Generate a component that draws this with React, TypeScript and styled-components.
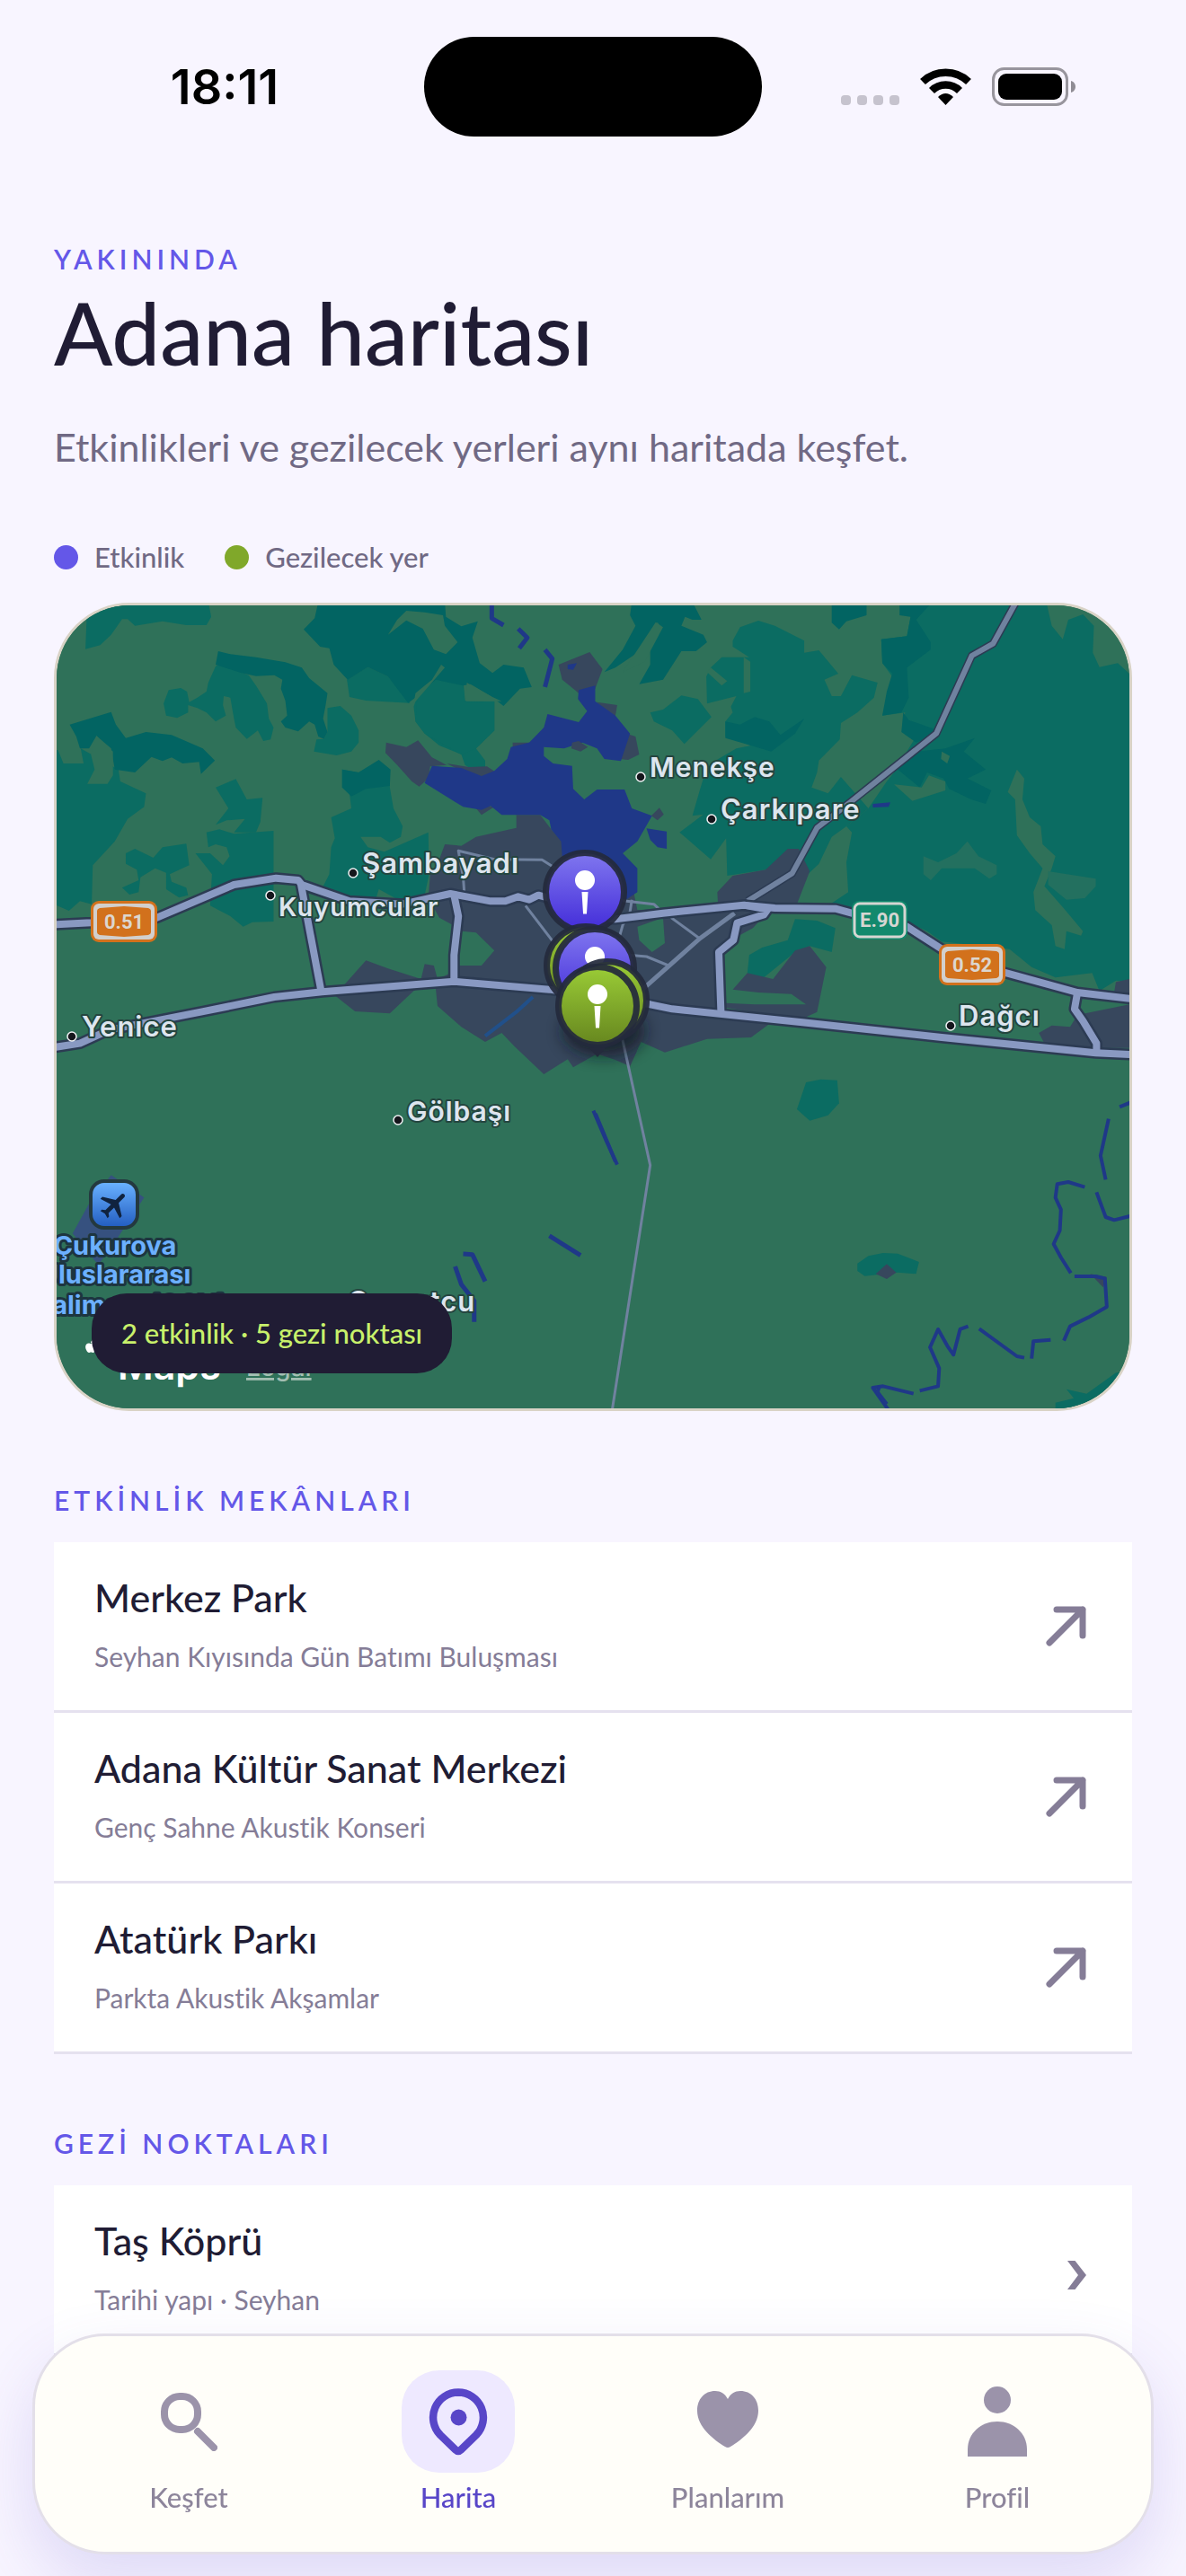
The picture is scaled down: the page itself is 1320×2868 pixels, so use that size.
import React from 'react';
import styled, { createGlobalStyle } from 'styled-components';
import { FaApple } from 'react-icons/fa';

const color = {
  page: '#f8f5ff',
  ink: '#201c34',
  violet: '#6457e8',
  violetDeep: '#5846c8',
  lime: '#c8f16b',
  olive: '#80a82a',
  muted: '#706984',
  faint: '#857d97',
  line: '#e5e1ef',
};

const land = {
  base: '#2f7159',
  hill: '#0b6c62',
  forest: '#026462',
  haze: '#23705f',
  water: '#1f3888',
  urban: '#37475d',
  road: '#8999c2',
  casing: '#2c3b53',
  minor: '#70829f',
};

const GlobalStyle = createGlobalStyle`
  *, *::before, *::after { box-sizing: border-box; }
  body {
    margin: 0;
    background: ${color.page};
    color: ${color.ink};
    font-family: Lato, "Open Sans", sans-serif;
    font-variant-ligatures: none;
  }
`;

const Page = styled.div`
  min-height: 100vh;
  background: ${color.page};
`;

/* ---------- status bar ---------- */

const StatusBar = styled.div`
  display: grid;
  grid-template-columns: 1fr 376px 1fr;
  align-items: center;
  height: 152px;
  padding-top: 41px;
`;

const Clock = styled.time`
  padding-left: 28px;
  text-align: center;
  font: 600 54px/60px Inter, sans-serif;
  color: #000;
`;

const Island = styled.div`
  height: 111px;
  border-radius: 56px;
  background: #000;
`;

const StatusIcons = styled.div`
  display: flex;
  justify-content: center;
  padding-right: 34px;
`;

/* ---------- content ---------- */

const Main = styled.main`
  display: flex;
  flex-direction: column;
  padding: 115px 60px 245px;
`;

const Eyebrow = styled.p`
  margin: 0;
  font-size: 30px;
  line-height: 42px;
  font-weight: 600;
  letter-spacing: 5px;
  color: ${color.violet};
`;

const Title = styled.h1`
  margin: 6px 0 43px;
  font-size: 96px;
  line-height: 110px;
  font-weight: 500;
`;

const Lead = styled.p`
  margin: 0;
  font-size: 43px;
  line-height: 60px;
  color: ${color.muted};
`;

const Legend = styled.ul`
  display: flex;
  gap: 45px;
  margin: 71px 0 30px;
  padding: 0;
  list-style: none;
`;

const LegendItem = styled.li<{ $dot: string }>`
  display: flex;
  align-items: center;
  gap: 18px;
  font-size: 31px;
  line-height: 42px;
  font-weight: 500;
  color: ${color.muted};

  &::before {
    content: "";
    width: 27px;
    height: 27px;
    border-radius: 50%;
    background: ${(p) => p.$dot};
  }
`;

const MapCard = styled.section`
  position: relative;
  height: 900px;
  overflow: hidden;
  border: 3px solid #d9d3c6;
  border-radius: 84px;
  background: ${land.base};
`;

const MapSvg = styled.svg`
  display: block;
  width: 100%;
  height: 100%;
`;

const CountBadge = styled.p`
  position: absolute;
  left: 39px;
  bottom: 39px;
  margin: 0;
  padding: 22px 33px;
  border-radius: 39px;
  background: ${color.ink};
  color: ${color.lime};
  font-size: 31px;
  line-height: 45px;
  font-weight: 500;
`;

const Section = styled.section`
  margin-top: 78px;
`;

const SectionTitle = styled.h2`
  margin: 0 0 26px;
  font-size: 30px;
  line-height: 42px;
  font-weight: 600;
  letter-spacing: 5px;
  color: ${color.violet};
`;

const List = styled.ul`
  margin: 0;
  padding: 0;
  list-style: none;
  background: #fff;
`;

const RowLink = styled.a`
  display: flex;
  align-items: center;
  justify-content: space-between;
  height: 190px;
  padding: 0 51px 0 45px;
  border-bottom: 3px solid ${color.line};
  color: inherit;
  text-decoration: none;
`;

const RowText = styled.span`
  display: flex;
  flex-direction: column;
  gap: 15px;
  padding-bottom: 6px;
`;

const RowTitle = styled.span`
  font-size: 43px;
  line-height: 58px;
  font-weight: 500;
`;

const RowNote = styled.span`
  font-size: 30px;
  line-height: 42px;
  color: ${color.faint};
`;

/* ---------- tab bar ---------- */

const TabBar = styled.nav`
  position: fixed;
  left: 36px;
  right: 36px;
  bottom: 24px;
  display: grid;
  grid-template-columns: repeat(4, 1fr);
  height: 246px;
  padding: 38px 21px 0;
  border: 3px solid #e3dfe9;
  border-radius: 81px;
  background: #fffef9;
  box-shadow: 0 30px 72px rgba(88, 70, 200, 0.16);
`;

const Tab = styled.button<{ $active?: boolean }>`
  display: flex;
  flex-direction: column;
  align-items: center;
  gap: 6px;
  padding: 0;
  border: 0;
  background: none;
  font: 500 31px/42px Lato, "Open Sans", sans-serif;
  font-variant-ligatures: none;
  color: ${(p) => (p.$active ? color.violetDeep : '#8d859b')};
  cursor: pointer;
`;

const TabIcon = styled.span<{ $active?: boolean }>`
  display: grid;
  place-items: center;
  width: 126px;
  height: 114px;
  border-radius: 42px;
  background: ${(p) => (p.$active ? '#eee9ff' : 'transparent')};
`;

/* ---------- map drawing ---------- */

const Shape = ({ fill, p }: { fill: string; p: string[] }) => (
  <g fill={fill}>
    {p.map((points) => (
      <polygon key={points} points={points} />
    ))}
  </g>
);

const Lines = ({ stroke, w, p }: { stroke: string; w: number; p: string[] }) => (
  <g fill="none" stroke={stroke} strokeWidth={w} strokeLinejoin="round">
    {p.map((points) => (
      <polyline key={points} points={points} vectorEffect="non-scaling-stroke" />
    ))}
  </g>
);

const highways = [
  '40,1109 150,1102 330,1085 540,975 655,953 715,960 725,975 855,1030 1000,1040 1130,1005 1240,1030 1280,1030 1315,1015 1345,1025 1370,1010 1400,1020 1480,1080 1580,1090 1710,1070 1930,1043 2015,1053 2180,1055 2240,1075 2375,1115 2470,1190 2640,1268 2840,1335 3000,1358',
  '40,1520 120,1505 200,1460 450,1400 650,1350 780,1333 1140,1298 1400,1325 1675,1375 1735,1390 2090,1435 2470,1485 2890,1537 3000,1543',
  '722,970 778,1333',
  '1140,1010 1152,1080 1140,1210 1140,1298',
  '1930,1043 1995,1058 1985,1075 1912,1103 1902,1160 1862,1200 1868,1403',
  '2840,1335 2832,1390 2855,1430 2892,1505 2892,1535',
];

const places = [
  { name: 'Menekşe', x: 723, y: 865, dx: 713, dy: 865, size: 30 },
  { name: 'Çarkıpare', x: 802, y: 912, dx: 792, dy: 912 },
  { name: 'Şambayadı', x: 403, y: 972, dx: 393, dy: 972 },
  { name: 'Kuyumcular', x: 310, y: 1020, dx: 301, dy: 997, size: 29 },
  { name: 'Yenice', x: 91, y: 1154, dx: 80, dy: 1154 },
  { name: 'Dağcı', x: 1067, y: 1142, dx: 1058, dy: 1142 },
  { name: 'Gölbaşı', x: 453, y: 1248, dx: 443, dy: 1247, size: 30 },
];

const airportLines = [
  { text: 'Çukurova', y: 1397 },
  { text: 'Uluslararası', y: 1429 },
  { text: 'Havalimanı (COV)', y: 1463 },
];

const Pin = ({ x, y, kind, plain }: { x: number; y: number; kind: string; plain?: boolean }) => (
  <g transform={`translate(${x} ${y})`}>
    <circle r="43" fill={`url(#${kind})`} />
    <circle r="43.5" fill="none" stroke="#242a3c" strokeWidth="7" strokeOpacity="0.93" />
    {!plain && (
      <g fill="#fff">
        <circle cy="-13" r="11" />
        <path d="M-3.500 0H3.500L2 24.500H-2Z" />
      </g>
    )}
  </g>
);

const Shield = ({ x, y, text }: { x: number; y: number; text: string }) => (
  <g transform={`translate(${x} ${y})`}>
    <rect width="74" height="46" rx="9" fill="#d2711c" />
    <rect x="3" y="3" width="68" height="40" rx="6" fill="#d2cfcc" />
    <path d="M7 11Q7 9 10 8L37 6L64 8Q67 9 67 11V35Q67 37 64 38L37 40L10 38Q7 37 7 35Z" fill="#d2711c" />
    <text x="37" y="31" textAnchor="middle" fill="#dcd6cf" fontFamily="Roboto, sans-serif" fontWeight="700" fontSize="22">
      {text}
    </text>
  </g>
);

const CityMap = () => (
  <MapSvg viewBox="63 674 1194 894" preserveAspectRatio="xMidYMid slice" role="img" aria-label="Adana haritası">
    <defs>
      <linearGradient id="event" x1="0" y1="0" x2="0" y2="1">
        <stop offset="0.050" stopColor="#7d73ee" />
        <stop offset="0.950" stopColor="#4630da" />
      </linearGradient>
      <linearGradient id="place" x1="0" y1="0" x2="0" y2="1">
        <stop offset="0.050" stopColor="#97c835" />
        <stop offset="0.950" stopColor="#698a20" />
      </linearGradient>
      <linearGradient id="airport" x1="0" y1="0" x2="0" y2="1">
        <stop offset="0" stopColor="#69b1ff" />
        <stop offset="1" stopColor="#245fc2" />
      </linearGradient>
      <filter id="soft" x="-50%" y="-50%" width="200%" height="200%">
        <feGaussianBlur stdDeviation="9" />
      </filter>
    </defs>
    <rect x="63" y="674" width="1194" height="894" fill={land.base} />

    <g transform="translate(40 660) scale(0.40816 0.33333)">
      <Shape
        fill={land.hill}
        p={[
          '140,30 470,30 478,80 465,108 410,108 345,95 270,110 250,88 235,88 205,140 175,175 135,188',
          '490,245 500,240 580,275 600,310 630,370 635,420 648,450 640,490 620,495 605,460 575,488 545,450 540,420 530,350 512,345 510,375 518,410 490,430 465,400 440,385 415,375 415,400 385,418 355,410 348,370 362,325 395,318 412,330 418,365 440,350 465,330 470,300',
          '795,385 830,378 860,410 880,460 880,500 860,530 820,543 758,530 765,490 785,488 795,465',
          '905,248 960,280 1020,368 900,360 855,348 848,290',
          '1040,345 1100,280 1165,290 1170,360 1250,362 1250,460 1200,520 1225,560 1225,595 1210,605 1170,575 1160,540 1100,510 1060,470 1035,430 1030,380',
          '40,525 60,525 75,570 130,570 122,520 225,590 230,630 300,670 295,715 250,755 215,830 155,910 152,1040 120,1030 90,1062 40,1035',
          '490,650 545,622 575,690 618,685 612,765 600,800 540,800 570,755 520,760 490,775 525,720',
          '465,800 500,790 540,805 648,795 648,1098 590,1100 565,1115 530,1080 475,1045 480,940 435,870 475,870 510,910 528,880 520,850 490,840 470,850',
          '245,870 270,855 320,885 345,850 410,838 418,910 365,940 370,965 410,985 415,1010 390,1018 355,990 355,935 325,920 285,950 280,1000 255,1008 235,985 280,960 275,925 245,905',
          '835,590 880,600 935,560 965,590 965,650 975,720 1000,780 995,815 965,835 940,815 885,815 905,850 950,865 1070,800 1072,940 1060,1010 1030,1030 980,1020 935,990 925,1030 860,1035 775,1000 800,940 805,850 815,820 805,750 860,720 855,670 835,650',
        ]}
      />
      <Shape
        fill={land.forest}
        p={[
          '497,195 530,205 600,215 680,232 725,250 745,285 795,335 790,375 783,420 795,465 785,488 770,480 760,440 745,430 715,463 680,450 668,430 685,410 680,360 668,320 672,290 650,275 600,278 560,268 490,240',
          '770,30 1115,30 1118,80 1160,112 1205,95 1190,150 1210,235 1245,268 1275,240 1330,250 1352,315 1320,320 1275,378 1240,345 1185,305 1165,310 1165,340 1100,350 1040,345 1015,368 960,280 905,248 850,290 812,240 800,185 775,180 730,122 760,85',
          '92,440 205,398 218,440 245,485 300,465 370,475 455,520 488,560 450,605 445,565 400,570 370,550 345,562 315,548 270,600 215,590 205,520 165,478 145,520 120,520 110,480',
          '835,590 880,600 935,558 967,590 965,645 900,655 860,680 835,650',
        ]}
      />
      <Shape
        fill={land.hill}
        p={['1040,345 1090,290 1165,310 1170,365 1250,362 1250,460 1200,520 1160,540 1060,470 1035,430']}
      />
      <Shape
        fill={land.base}
        p={[
          '960,140 985,90 1010,60 1060,65 1110,75 1115,110 1150,165 1118,205 1085,190 1055,120 1010,92',
          '1105,240 1115,250 1030,370 1035,335 1080,290',
          '1175,300 1240,345 1270,362 1172,362',
          '165,478 210,530 210,610 195,638 140,638 160,590 150,540',
        ]}
      />
      <g transform="translate(1470 0)">
        <Shape
          fill={land.hill}
          p={[
            '430,160 450,115 500,93 545,110 625,160 625,200 665,192 718,270 680,290 700,345 725,345 755,275 825,300 815,350 770,400 725,435 722,490 665,560 660,600 645,650 690,670 725,615 800,720 740,780 700,815 665,905 635,940 610,855 520,925 415,945 412,820 370,890 285,800 350,740 320,745 340,660 355,600 370,570 440,520 480,510 410,480 410,430 430,400 425,380 440,345 360,370 358,280 370,250 400,215 475,215 430,180',
            '900,30 1285,30 1300,110 1330,155 1345,90 1385,72 1415,110 1412,200 1430,248 1480,235 1530,290 1530,1300 1475,1295 1430,1330 1410,1270 1310,1285 1245,1250 1185,1190 1000,1165 960,1130 905,1100 755,1065 690,1045 745,1000 740,900 755,800 740,780 800,720 850,630 870,600 930,480 895,465 900,400 838,410 865,280 838,235 835,155 905,145 915,80',
            '205,400 240,390 290,343 335,355 372,415 298,505 265,460 215,430',
            '600,1090 660,1095 710,1120 700,1200 640,1180 600,1200 500,1300 470,1270 475,1210 510,1185 580,1160',
          ]}
        />
        <Shape
          fill={land.forest}
          p={[
            '155,30 320,30 345,90 320,90 300,80 290,110 350,140 360,165 330,195 290,195 240,290 175,305 205,240 205,170 235,120 225,98 200,140 170,200 110,250 80,265 130,190 165,110 150,75',
            '700,30 795,30 795,75 740,95 720,122 700,100',
            '885,30 975,30 930,90 970,165 970,190 905,250 910,350 890,400 838,410 850,330 865,270 838,235 835,155 905,145 915,80 885,75',
            '410,430 450,440 490,415 530,430 560,475 625,420 600,470 535,530 480,510 410,485',
            '895,400 910,425 980,455 985,470 930,500 890,465',
            '1010,520 1090,485 1060,530 1120,590 1070,620 1135,660 1120,705 1080,690 1020,655 1005,620 960,600 940,650 880,590 930,530',
          ]}
        />
        <Shape
          fill={land.base}
          p={[
            '220,98 240,115 190,230 130,265 165,200',
            '460,215 478,230 478,330 460,335',
            '370,250 415,295 400,310 360,265',
            '1205,590 1225,620 1220,690 1240,750 1270,780 1275,840 1310,880 1300,920 1280,980 1330,1050 1385,1130 1380,1145 1340,1130 1335,1190 1310,1180 1300,1110 1255,1060 1250,1000 1275,920 1240,870 1205,810 1200,690 1180,665',
            '870,640 945,650 965,610 1010,630 1010,660 920,695',
            '1000,530 1022,545 1015,570 998,555',
          ]}
        />
        <Shape
          fill={land.haze}
          p={[
            '950,880 990,900 1040,870 1070,830 1100,880 1150,910 1150,940 1130,955 1090,920 1000,920 970,960 950,940',
            '1290,930 1420,955 1420,980 1390,1020 1340,1025 1290,975',
          ]}
        />
      </g>

      <Shape
        fill={land.urban}
        p={[
          '955,500 1010,515 1042,493 1080,550 1120,575 1075,580 1070,620 1045,647 1025,630 985,575 953,535',
          '1120,570 1180,582 1230,580 1255,600 1215,620 1160,595',
          '1300,500 1350,500 1345,515 1300,520',
          '1425,240 1510,198 1545,255 1525,320 1480,335 1435,290',
          '1190,705 1250,715 1215,742',
          '1310,742 1375,742 1405,790 1435,830 1480,900 1600,960 1630,1000 1640,1060 1860,1045 1858,1000 1900,945 1990,925 2050,855 2080,855 2110,930 2075,1040 2000,1060 1955,1120 1910,1150 1865,1200 1875,1390 2000,1440 1950,1485 1830,1490 1715,1535 1650,1500 1620,1582 1580,1560 1530,1540 1465,1585 1450,1558 1385,1608 1305,1515 1270,1470 1225,1500 1160,1450 1095,1380 1090,1320 1060,1310 1030,1330 965,1405 870,1398 815,1345 900,1228 960,1255 1050,1290 1060,1240 1085,1245 1095,1290 1140,1265 1145,1115 1100,1085 1070,1020 1075,940 1100,890 1115,840 1160,845 1200,815 1310,785',
          '2110,1180 2155,1250 2130,1400 2095,1420 2000,1410 1880,1385 1880,1370 1960,1375 2100,1375 2060,1340 1970,1335 1900,1325 1940,1270 2010,1290 2070,1195',
          '1530,365 1585,375 1580,412 1555,395',
          '1610,470 1635,480 1645,540 1615,558 1588,555 1595,500',
          '1700,718 1712,740 1695,760 1678,745',
          '2945,1300 3000,1285 3000,1370 2840,1345 2740,1322 2850,1330 2940,1335',
          '2840,1410 3000,1370 3000,1520 2910,1520 2750,1505 2735,1470 2770,1445 2820,1450',
        ]}
      />
      <Shape
        fill={land.base}
        p={['1160,1130 1200,1135 1250,1195 1215,1245 1145,1245', '1640,1115 1710,1085 1715,1170 1680,1200 1645,1160']}
      />
      <Shape
        fill={land.water}
        p={[
          '1395,405 1480,432 1503,395 1478,355 1480,325 1525,310 1525,362 1580,410 1620,470 1595,562 1550,555 1530,520 1490,500 1440,520 1385,515 1385,545 1410,570 1462,578 1465,655 1495,690 1530,657 1605,657 1625,720 1680,745 1640,830 1600,870 1640,920 1640,1000 1590,1040 1500,900 1435,880 1432,830 1405,790 1400,760 1375,742 1270,742 1240,712 1215,725 1165,715 1060,635 1080,578 1160,585 1215,612 1250,595 1285,555 1295,515 1345,500 1385,450',
          '1665,787 1720,797 1720,855 1695,850 1675,825',
          '2282,705 2330,700 2325,715 2282,717',
          '1450,240 1475,235 1465,257 1450,255',
        ]}
      />
      <Shape fill={land.urban} p={['1462,500 1480,495 1505,515 1485,530 1460,520']} />
      <Lines
        stroke={land.water}
        w={5}
        p={[
          '1243,30 1243,85 1275,108',
          '1315,120 1340,150 1318,185',
          '1388,190 1408,220 1388,315',
          '1400,2148 1485,2213',
          '1165,2208 1190,2210 1225,2300',
          '1143,2250 1160,2310 1195,2365 1195,2435',
        ]}
      />
      <Lines stroke="#21508a" w={4} p={['1355,1350 1310,1400 1225,1480']} />

      <g transform="translate(1470 1320)">
        <Shape
          fill={land.hill}
          p={[
            '630,315 670,305 715,308 720,385 690,425 640,443 605,405',
            '770,920 800,895 840,885 880,887 938,915 930,955 880,950 790,962 770,945',
            '1310,1385 1360,1370 1340,1340 1395,1355 1475,1285 1530,1280 1530,1420 1310,1420',
          ]}
        />
        <Shape fill={land.urban} p={['850,922 876,950 850,972 820,955', '1405,955 1450,965 1440,1000']} />
        <Lines
          stroke={land.water}
          w={4}
          p={[
            '50,410 85,510 115,590',
            '56,420 90,520 110,580',
            '1485,397 1530,375',
            '1455,437 1433,560 1447,640',
            '1390,665 1345,648 1315,655 1310,700 1325,740 1322,810 1305,855 1325,900 1352,952',
            '1362,963 1420,963 1445,970 1450,1065 1400,1100 1350,1130 1333,1178',
            '1422,682 1447,765 1470,775 1530,757',
            '1297,1175 1250,1180 1245,1238',
            '1225,1235 1205,1230 1102,1138',
            '1072,1130 1050,1140 1032,1225 1015,1195 990,1140 968,1200 993,1270 990,1330 940,1345',
            '923,1355 840,1330 812,1335 855,1410',
            '830,1330 825,1350 850,1390',
          ]}
        />
      </g>
      <Shape fill="#36517f" p={['205,1945 295,2020 225,2150 170,2245 100,2140 145,2040']} />

      <Lines stroke={land.casing} w={9} p={['2673,30 2610,170 2552,210 2455,470 2220,700 2130,785 2062,937 1940,1030']} />
      <Lines stroke={land.minor} w={6} p={['2673,30 2610,170 2552,210 2455,470 2220,700 2130,785 2062,937 1940,1030']} />
      <Lines stroke={land.minor} w={5} p={['1905,1070 1810,1155 1640,1340']} />
      <Lines
        stroke={land.minor}
        w={3}
        p={[
          '1732,1085 1810,1155',
          '1600,1028 1685,1040 1698,1055',
          '1600,1208 1665,1215 1725,1245',
          '1625,1025 1620,1065 1600,1110 1592,1145',
          '1168,1000 1165,950 1152,862 1250,890 1380,892 1410,915 1480,950',
          '1335,1045 1410,1165',
          '1590,1440 1675,1912 1570,2740',
        ]}
      />
      <Lines stroke={land.casing} w={13} p={highways} />
      <Lines stroke={land.road} w={8} p={highways} />
    </g>

    <Shield x={101} y={1003} text="0.51" />
    <Shield x={1045} y={1051} text="0.52" />
    <g transform="translate(948 1003)">
      <rect width="62" height="43" rx="8" fill="#12896d" />
      <rect x="3" y="3" width="56" height="37" rx="6" fill="none" stroke="#d6d6d2" strokeWidth="3" />
      <text x="31" y="29" textAnchor="middle" fill="#d6d6d2" fontFamily="Roboto, sans-serif" fontWeight="700" fontSize="22">
        E.90
      </text>
    </g>

    <g fontFamily="Inter, Roboto, sans-serif" fontWeight="600" fill="#dde5ee" stroke="#24453f" strokeWidth="4" strokeLinejoin="round" paintOrder="stroke" letterSpacing="1">
      {places.map((p) => (
        <text key={p.name} x={p.x} y={p.y} fontSize={p.size ?? 31}>
          {p.name}
        </text>
      ))}
      <text x="387" y="1460" fontSize="31">
        Camutcu
      </text>
    </g>
    {places.map((p) => (
      <circle key={p.name} cx={p.dx} cy={p.dy} r="5" fill="#15161c" stroke="#f0f2f4" strokeWidth="1.500" />
    ))}

    <rect x="99" y="1313" width="56" height="56" rx="17" fill="#24393f" />
    <rect x="103" y="1317" width="48" height="48" rx="13" fill="url(#airport)" />
    <path
      transform="translate(127 1341) rotate(45) scale(1.600) translate(-11.500 -12)"
      d="M21 16v-2l-8-5V3.500c0-.83-.67-1.500-1.500-1.500S10 2.670 10 3.500V9l-8 5v2l8-2.500V19l-2 1.500V22l3.500-1 3.500 1v-1.500L13 19v-5.500z"
      fill="#10233f"
    />
    <g fontFamily="Inter, Roboto, sans-serif" fontWeight="700" fontSize="29" fill="#6cb0ff" stroke="#1d3540" strokeWidth="6" strokeLinejoin="round" paintOrder="stroke" textAnchor="middle">
      {airportLines.map((l) => (
        <text key={l.text} x="128" y={l.y}>
          {l.text}
        </text>
      ))}
    </g>

    <FaApple x={93} y={1491} width={40} height={48} color="#fff" />
    <text x="131" y="1536" fontFamily="Inter, Roboto, sans-serif" fontWeight="600" fontSize="43" fill="#fff">
      Maps
    </text>
    <a href="#legal">
      <text x="274" y="1532" fontFamily="Inter, Roboto, sans-serif" fontWeight="500" fontSize="28" fill="#a3bfb3" textDecoration="underline">
        Legal
      </text>
    </a>

    <ellipse cx="672" cy="1148" rx="46" ry="28" fill="#10151f" opacity="0.700" filter="url(#soft)" />
    <path d="M650 1160H680L665 1177Z" fill="#242a3c" />
    <Pin x={651} y={993} kind="event" />
    <Pin x={652} y={1075} kind="place" plain />
    <Pin x={662} y={1078} kind="event" />
    <Pin x={676} y={1114} kind="place" plain />
    <Pin x={665} y={1120} kind="place" />
  </MapSvg>
);

/* ---------- icons ---------- */

const OpenArrow = () => (
  <svg width="45" height="45" viewBox="0 0 45 45" fill="none" stroke={color.faint} strokeWidth="7" strokeLinecap="round" strokeLinejoin="round" aria-hidden="true">
    <path d="M4 41L41 4M12 4H41V33" />
  </svg>
);

const Chevron = () => (
  <svg width="21" height="44" viewBox="0 0 21 44" fill={color.faint} aria-hidden="true">
    <path d="M0 12H8.500L21 28L8.500 44H0L12 28Z" />
  </svg>
);

const SearchIcon = () => (
  <svg width="64" height="66" viewBox="0 0 64 66" fill="none" stroke="#9b93aa" aria-hidden="true">
    <rect x="5" y="5" width="37" height="37" rx="17" strokeWidth="8" />
    <path d="M42 44L60 62" strokeWidth="8" strokeLinecap="round" />
  </svg>
);

const MapPinIcon = () => (
  <svg width="66" height="76" viewBox="0 0 66 76" fill="none" stroke={color.violetDeep} aria-hidden="true">
    <path d="M33 5.500A28 28 0 0 0 13 53L30 69.500Q33 72.500 36 69.500L53 53A28 28 0 0 0 33 5.500Z" strokeWidth="8.500" strokeLinejoin="round" />
    <circle cx="33.500" cy="33.500" r="9" fill={color.violetDeep} stroke="none" />
  </svg>
);

const HeartIcon = () => (
  <svg width="68" height="68" viewBox="0 0 68 68" fill="#9b93aa" aria-hidden="true">
    <path d="M34 9C37 3 42 0 48 0C60 0 68 9 68 22C68 40 50 54 37 62Q34 64 31 62C18 54 0 40 0 22C0 9 8 0 20 0C26 0 31 3 34 9Z" />
  </svg>
);

const PersonIcon = () => (
  <svg width="66" height="78" viewBox="0 0 66 78" fill="#9b93aa" aria-hidden="true">
    <circle cx="33" cy="15" r="15" />
    <path d="M0 78V70C0 52 15 39 33 39C51 39 66 52 66 70V78Z" />
  </svg>
);

const StatusGlyphs = () => (
  <svg width="262" height="44" viewBox="0 0 262 44" role="img" aria-label="Wi-Fi ve pil">
    <g fill="#c6c3ce">
      {[0, 18, 36, 54].map((x) => (
        <rect key={x} x={x} y="31" width="11" height="11" rx="4" />
      ))}
    </g>
    <g fill="none" stroke="#000" strokeWidth="8.500">
      <path d="M91 16A37 37 0 0 1 142 16" />
      <path d="M101 26A22 22 0 0 1 132 26" />
    </g>
    <path d="M108 33Q116.500 25 125 33L116.500 42Z" />
    <rect x="169.500" y="1.500" width="82" height="40" rx="12" fill="none" stroke="#98959d" strokeWidth="3" />
    <rect x="175" y="7" width="71" height="29" rx="9" />
    <path d="M256 15C259.500 16 261 19 261 21.500S259.500 27 256 28Z" fill="#8f8c94" />
  </svg>
);

/* ---------- screen ---------- */

const venues = [
  { title: 'Merkez Park', note: 'Seyhan Kıyısında Gün Batımı Buluşması' },
  { title: 'Adana Kültür Sanat Merkezi', note: 'Genç Sahne Akustik Konseri' },
  { title: 'Atatürk Parkı', note: 'Parkta Akustik Akşamlar' },
];

const sights = [{ title: 'Taş Köprü', note: 'Tarihi yapı · Seyhan' }];

const tabs = [
  { label: 'Keşfet', Icon: SearchIcon },
  { label: 'Harita', Icon: MapPinIcon, active: true },
  { label: 'Planlarım', Icon: HeartIcon },
  { label: 'Profil', Icon: PersonIcon },
];

type Place = { title: string; note: string };

const PlaceList = ({ heading, items, Icon }: { heading: string; items: Place[]; Icon: () => React.JSX.Element }) => (
  <Section>
    <SectionTitle>{heading}</SectionTitle>
    <List>
      {items.map((item) => (
        <li key={item.title}>
          <RowLink href="#">
            <RowText>
              <RowTitle>{item.title}</RowTitle>
              <RowNote>{item.note}</RowNote>
            </RowText>
            <Icon />
          </RowLink>
        </li>
      ))}
    </List>
  </Section>
);

export default function App() {
  return (
    <Page lang="tr">
      <GlobalStyle />
      <StatusBar>
        <Clock>18:11</Clock>
        <Island />
        <StatusIcons>
          <StatusGlyphs />
        </StatusIcons>
      </StatusBar>
      <Main>
        <Eyebrow>YAKININDA</Eyebrow>
        <Title>Adana haritası</Title>
        <Lead>Etkinlikleri ve gezilecek yerleri aynı haritada keşfet.</Lead>
        <Legend>
          <LegendItem $dot={color.violet}>Etkinlik</LegendItem>
          <LegendItem $dot={color.olive}>Gezilecek yer</LegendItem>
        </Legend>
        <MapCard>
          <CityMap />
          <CountBadge>2 etkinlik · 5 gezi noktası</CountBadge>
        </MapCard>
        <PlaceList heading="ETKİNLİK MEKÂNLARI" items={venues} Icon={OpenArrow} />
        <PlaceList heading="GEZİ NOKTALARI" items={sights} Icon={Chevron} />
      </Main>
      <TabBar>
        {tabs.map(({ label, Icon, active }) => (
          <Tab key={label} type="button" $active={active} aria-current={active ? 'page' : undefined}>
            <TabIcon $active={active}>
              <Icon />
            </TabIcon>
            {label}
          </Tab>
        ))}
      </TabBar>
    </Page>
  );
}
